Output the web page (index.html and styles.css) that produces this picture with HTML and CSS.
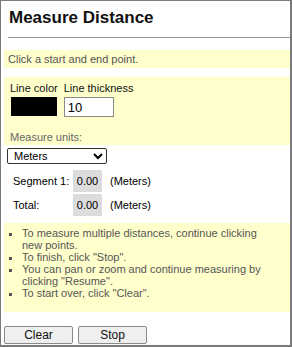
FILE: index.html
```html
<!DOCTYPE html>
<html lang="en">
<head>
    <meta charset="UTF-8">
    <title>Measure Distance</title>
    <link rel="stylesheet" href="styles.css">
</head>
<body>
    <div class="panel">
        <h2 class="title">Measure Distance</h2>
        <hr class="rule">

        <div class="note hint">Click a start and end point.</div>

        <!-- line settings -->
        <div class="note settings">
            <div class="fields">
                <div class="field">
                    <span class="label">Line color</span>
                    <div class="swatch"></div>
                </div>
                <div class="field">
                    <span class="label">Line thickness</span>
                    <input type="text" class="thick" value="10">
                </div>
            </div>
            <div class="units-label">Measure units:</div>
        </div>

        <select class="units">
            <option>Meters</option>
            <option>Kilometers</option>
            <option>Feet</option>
            <option>Miles</option>
        </select>

        <table class="results">
            <tr>
                <td class="name">Segment 1:</td>
                <td class="value">0.00</td>
                <td class="unit">(Meters)</td>
            </tr>
            <tr>
                <td class="name">Total:</td>
                <td class="value">0.00</td>
                <td class="unit">(Meters)</td>
            </tr>
        </table>

        <div class="note help">
            <ul>
                <li>To measure multiple distances, continue clicking<br>new points.</li>
                <li>To finish, click "Stop".</li>
                <li>You can pan or zoom and continue measuring by<br>clicking "Resume".</li>
                <li>To start over, click "Clear".</li>
            </ul>
        </div>

        <div class="buttons">
            <button type="button">Clear</button>
            <button type="button">Stop</button>
        </div>
    </div>
</body>
</html>
```

FILE: styles.css
```css
body {
    margin: 0;
    background-color: white;
    font-family: "Liberation Sans", Arial, sans-serif;
    font-size: 12px;
}
.panel {
    box-sizing: border-box;
    width: 292px;
    height: 347px;
    border: 1px solid #7a7a7a;
    border-right-width: 2px;
    border-bottom-width: 2px;
    padding-left: 3px;
    overflow: hidden;
}
.title {
    margin: 0;
    padding: 7px 0 0 5px;
    font-size: 17px;
    font-weight: bold;
    color: #111;
    line-height: 20px;
}
.rule {
    margin: 9px 0 0 4px;
    border: 0;
    border-top: 1px solid #9a9a9a;
    height: 0;
}
.note {
    background-color: #ffffcc;
}
.hint {
    margin-top: 12px;
    padding: 3px 0 3px 4px;
    color: #555;
    font-size: 11px;
    line-height: 12px;
}
.settings {
    margin-top: 9px;
    padding: 5px 0 5px 6px;
    height: 58px;
}
.fields {
    display: flex;
    gap: 6px;
}
.field {
    display: flex;
    flex-direction: column;
}
.label {
    font-size: 11px;
    line-height: 12px;
    color: #111;
    margin-bottom: 3px;
}
.swatch {
    width: 46px;
    height: 19px;
    margin-left: 1px;
    background-color: black;
}
.thick {
    box-sizing: border-box;
    width: 50px;
    height: 20px;
    margin: 0;
    padding: 1px 3px;
    border: 1px solid #8a8a8a;
    font-family: "Liberation Sans", Arial, sans-serif;
    font-size: 13px;
}
.units-label {
    margin-top: 14px;
    color: #666;
    font-size: 11px;
    line-height: 12px;
}
.units {
    margin: 3px 0 0 3px;
    width: 100px;
    height: 16px;
    padding: 0 2px;
    font-family: "Liberation Sans", Arial, sans-serif;
    font-size: 11px;
    border: 1px solid #333;
    border-radius: 2px;
    background-color: white;
}
.results {
    margin: 4px 0 0 3px;
    border-spacing: 2px;
    font-size: 11px;
}
.results td {
    height: 22px;
    padding: 0;
}
.name {
    width: 58px;
    padding-left: 4px !important;
}
.value {
    width: 29px;
    text-align: center;
    background-color: #dcdcdc;
}
.unit {
    padding-left: 6px !important;
}
.help {
    margin-top: 5px;
    height: 89px;
    color: #555;
    font-size: 11px;
    line-height: 12px;
}
.help ul {
    margin: 0;
    padding: 4px 0 0 18px;
    list-style: square;
    white-space: nowrap;
}
.buttons {
    display: flex;
    gap: 5px;
    margin-top: 14px;
}
.buttons button {
    width: 69px;
    height: 18px;
    padding: 0;
    border: 1px solid #8a8a8a;
    border-radius: 2px;
    background-color: #efefef;
    font-family: "Liberation Sans", Arial, sans-serif;
    font-size: 12px;
    color: #111;
}
```
